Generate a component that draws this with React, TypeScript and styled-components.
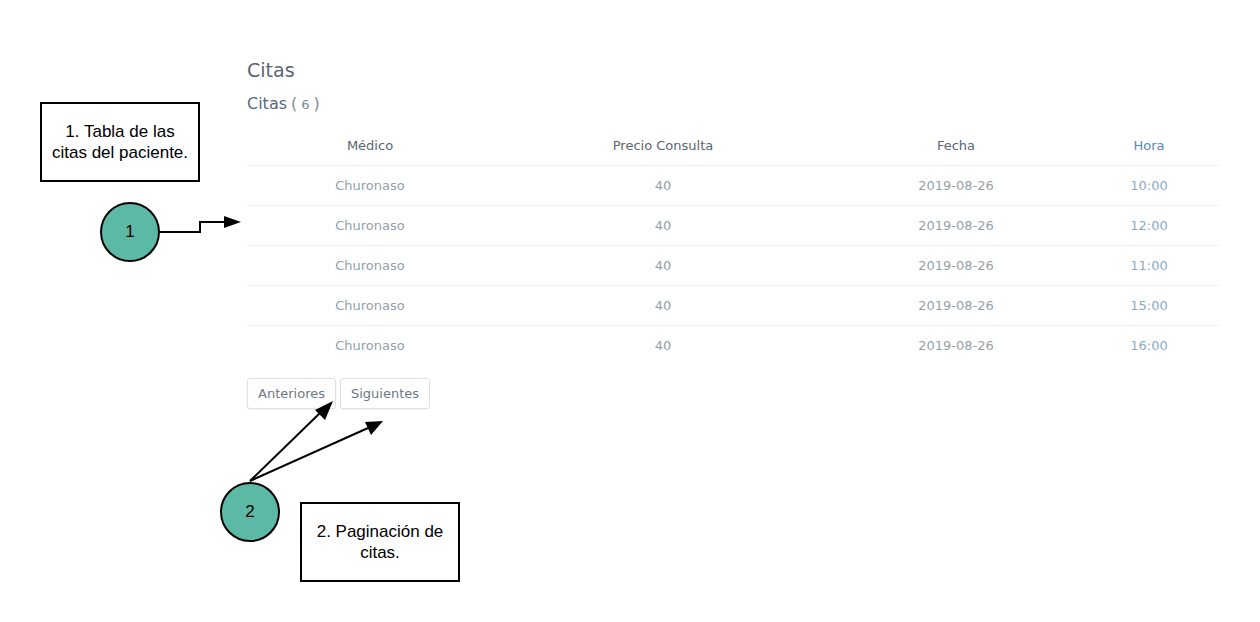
import React from "react";
import styled, { createGlobalStyle } from "styled-components";

const Global = createGlobalStyle`
  html, body { margin: 0; padding: 0; background: #fff; }
  body { font-family: "DejaVu Sans", "Open Sans", sans-serif; }
`;

const Page = styled.div`
  position: relative;
  width: 1260px;
  height: 622px;
  overflow: hidden;
`;

const Content = styled.main`
  padding: 58px 41px 0 247px;
  display: flex;
  flex-direction: column;
`;

const Title = styled.h1`
  margin: 0;
  font-size: 19px;
  font-weight: 400;
  color: #5b6570;
  line-height: 24px;
`;

const Subtitle = styled.h2`
  margin: 11px 0 0;
  font-size: 16px;
  font-weight: 400;
  color: #5b6a78;
  line-height: 22px;
  display: flex;
  align-items: baseline;
  gap: 4px;
`;

const Count = styled.span`
  font-size: 16px;
  color: #7d8a96;
  span { font-size: 13px; padding: 0 4px; }
`;

const Table = styled.table`
  margin-top: 10px;
  width: 972px;
  border-collapse: collapse;
  table-layout: fixed;
`;

const Th = styled.th<{ $blue?: boolean }>`
  font-weight: 400;
  font-size: 13px;
  color: ${(p) => (p.$blue ? "#5a88b0" : "#5a6672")};
  height: 39px;
  padding: 0;
  border-bottom: 1px solid #eef0f2;
  text-align: center;
`;

const Row = styled.tr`
  & + & td { border-top: 1px solid #eef0f2; }
`;

const Td = styled.td<{ $blue?: boolean }>`
  font-size: 13px;
  font-weight: 400;
  color: ${(p) => (p.$blue ? "#8fa9c2" : "#959fa9")};
  height: 39px;
  padding: 0;
  text-align: center;
`;

const Pager = styled.div`
  margin-top: 13px;
  display: flex;
  gap: 4px;
`;

const PageButton = styled.button`
  height: 31px;
  padding: 0 10px;
  background: #fff;
  border: 1px solid #dfe2e5;
  border-radius: 3px;
  box-shadow: 0 1px 2px rgba(0, 0, 0, 0.06);
  font-family: inherit;
  font-size: 13px;
  color: #6c7884;
  cursor: pointer;
`;

const Overlay = styled.svg`
  position: absolute;
  left: 0;
  top: 0;
  pointer-events: none;
`;

const Note = styled.div<{ $x: number; $y: number }>`
  position: absolute;
  left: ${(p) => p.$x}px;
  top: ${(p) => p.$y}px;
  width: 156px;
  height: 76px;
  border: 2px solid #000;
  background: #fff;
  display: flex;
  align-items: center;
  justify-content: center;
  text-align: center;
  font-family: "Liberation Sans", Arial, sans-serif;
  font-size: 17px;
  line-height: 21px;
  color: #000;
`;

const Marker = styled.div<{ $x: number; $y: number }>`
  position: absolute;
  left: ${(p) => p.$x}px;
  top: ${(p) => p.$y}px;
  width: 56px;
  height: 56px;
  border-radius: 50%;
  border: 2px solid #000;
  background: #5cb9a6;
  display: flex;
  align-items: center;
  justify-content: center;
  font-family: "Liberation Sans", Arial, sans-serif;
  font-size: 17px;
  color: #000;
`;

const rows = [
  { h: "10:00" },
  { h: "12:00" },
  { h: "11:00" },
  { h: "15:00" },
  { h: "16:00" },
];

export default function App() {
  return (
    <Page>
      <Global />
      <Content>
        <Title>Citas</Title>
        <Subtitle>
          Citas
          <Count>
            (<span>6</span>)
          </Count>
        </Subtitle>
        <Table>
          <colgroup>
            <col style={{ width: 246 }} />
            <col style={{ width: 340 }} />
            <col style={{ width: 246 }} />
            <col style={{ width: 140 }} />
          </colgroup>
          <thead>
            <tr>
              <Th>Médico</Th>
              <Th>Precio Consulta</Th>
              <Th>Fecha</Th>
              <Th $blue>Hora</Th>
            </tr>
          </thead>
          <tbody>
            {rows.map((r, i) => (
              <Row key={i}>
                <Td>Churonaso</Td>
                <Td>40</Td>
                <Td>2019-08-26</Td>
                <Td $blue>{r.h}</Td>
              </Row>
            ))}
          </tbody>
        </Table>
        <Pager>
          <PageButton>Anteriores</PageButton>
          <PageButton>Siguientes</PageButton>
        </Pager>
      </Content>

      <Overlay width="1260" height="622" viewBox="0 0 1260 622">
        <polyline points="160,232 200,232 200,222 226,222" fill="none" stroke="#000" strokeWidth="2" />
        <polygon points="224,216 241,222 224,228" fill="#000" />
        <line x1="250" y1="481" x2="320" y2="413" stroke="#000" strokeWidth="2" />
        <polygon points="333,401 325,420 315,410" fill="#000" />
        <line x1="250" y1="481" x2="368" y2="428" stroke="#000" strokeWidth="2" />
        <polygon points="383,421 371,435 365,422" fill="#000" />
      </Overlay>
      <Note $x={40} $y={102}>
        1. Tabla de las
        <br />
        citas del paciente.
      </Note>
      <Marker $x={100} $y={202}>1</Marker>
      <Marker $x={220} $y={482}>2</Marker>
      <Note $x={300} $y={502}>
        2. Paginación de
        <br />
        citas.
      </Note>
    </Page>
  );
}
